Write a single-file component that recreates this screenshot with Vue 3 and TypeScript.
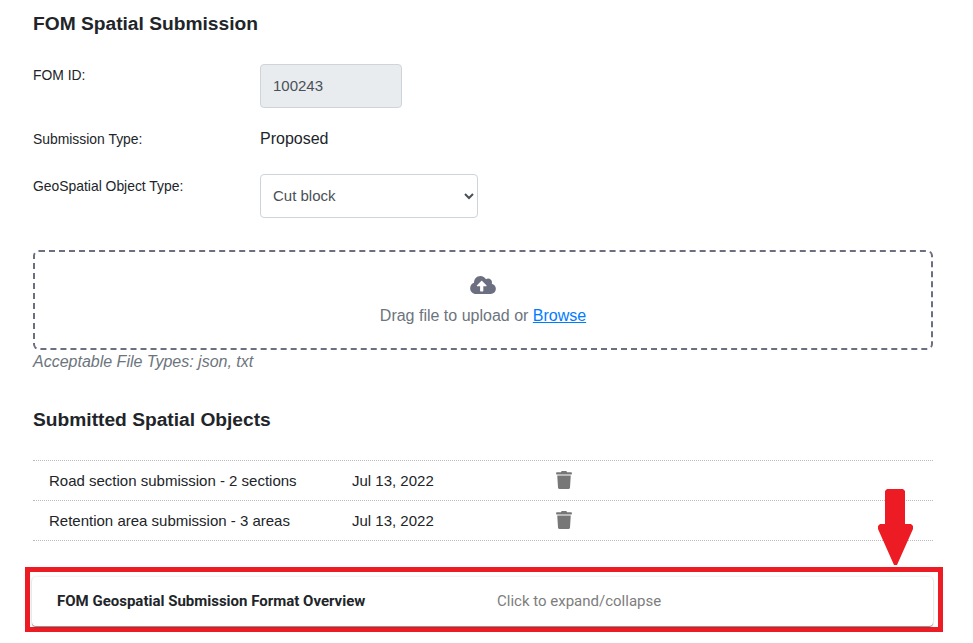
<script setup lang="ts">
interface SpatialObject {
  name: string;
  date: string;
}

const objects: SpatialObject[] = [
  { name: "Road section submission - 2 sections", date: "Jul 13, 2022" },
  { name: "Retention area submission - 3 areas", date: "Jul 13, 2022" },
];
</script>

<template>
  <div class="page">
    <h1 class="title">FOM Spatial Submission</h1>

    <div class="field field-id">
      <label class="label">FOM ID:</label>
      <input class="control id-input" value="100243" readonly />
    </div>
    <div class="field field-type">
      <label class="label">Submission Type:</label>
      <span class="type-value">Proposed</span>
    </div>
    <div class="field field-object">
      <label class="label">GeoSpatial Object Type:</label>
      <select class="control object-select">
        <option>Cut block</option>
        <option>Road section</option>
        <option>Retention area</option>
      </select>
    </div>

    <div class="dropzone">
      <svg class="cloud" viewBox="0 32 640 448" width="26" height="18">
        <path
          fill="#6c6f80"
          d="M537.6 226.6c4.1-10.7 6.4-22.4 6.4-34.6 0-53-43-96-96-96-19.7 0-38.1 6-53.3 16.2C367 64.2 315.3 32 256 32c-88.4 0-160 71.6-160 160 0 2.7.1 5.4.2 8.1C40.2 219.8 0 273.2 0 336c0 79.5 64.5 144 144 144h368c70.7 0 128-57.3 128-128 0-61.9-44-113.6-102.4-125.4zM393.4 288H328v112c0 8.8-7.2 16-16 16h-48c-8.8 0-16-7.2-16-16V288h-65.4c-14.3 0-21.4-17.2-11.3-27.3l105.4-105.4c6.2-6.2 16.4-6.2 22.6 0l105.4 105.4c10.1 10.1 2.9 27.3-11.3 27.3z"
        />
      </svg>
      <div class="drop-text">Drag file to upload or <a class="browse" href="#">Browse</a></div>
    </div>
    <div class="file-types">Acceptable File Types: json, txt</div>

    <h2 class="subtitle">Submitted Spatial Objects</h2>

    <div class="object-list">
      <div v-for="(item, index) in objects" :key="index" class="object-row">
        <span class="object-name">{{ item.name }}</span>
        <span class="object-date">{{ item.date }}</span>
        <svg class="trash" viewBox="0 0 448 512" width="16" height="18">
          <path
            fill="#777777"
            d="M432 32H312l-9.400-18.700A24 24 0 0 0 281.100 0H166.800a23.700 23.700 0 0 0-21.400 13.300L136 32H16A16 16 0 0 0 0 48v32a16 16 0 0 0 16 16h416a16 16 0 0 0 16-16V48a16 16 0 0 0-16-16zM53.200 467a48 48 0 0 0 47.900 45h245.800a48 48 0 0 0 47.900-45L416 128H32z"
          />
        </svg>
      </div>
    </div>

    <div class="highlight">
      <div class="accordion">
        <span class="accordion-title">FOM Geospatial Submission Format Overview</span>
        <span class="accordion-hint">Click to expand/collapse</span>
      </div>
    </div>

    <!-- annotation arrow over the page -->
    <svg class="arrow" viewBox="0 0 36 78" width="36" height="78">
      <path
        fill="#ed1c24"
        d="M9 0H25L27 2V35H33L35 37V40L19 76H16L0 40V37L2 35H7V2Z"
      />
    </svg>
  </div>
</template>

<style scoped>
.page {
  position: relative;
  box-sizing: border-box;
  width: 973px;
  height: 643px;
  padding: 12px 40px 0 33px;
  overflow: hidden;
  background: #fff;
  color: #212529;
  font-family: "Liberation Sans", Arial, sans-serif;
  font-size: 16px;
}
.title {
  margin: 0;
  font-size: 19.2px;
  line-height: 24px;
  font-weight: 700;
}
.field {
  display: flex;
  align-items: flex-start;
}
.label {
  width: 227px;
  flex-shrink: 0;
  font-size: 13.9px;
  line-height: 21px;
}
.field-id {
  margin-top: 28px;
}
.field-id .label {
  margin-top: 1px;
}
.field-type {
  margin-top: 19px;
  height: 24px;
}
.field-type .label {
  margin-top: 2px;
}
.type-value {
  line-height: 24px;
}
.field-object {
  margin-top: 23px;
}
.field-object .label {
  margin-top: 2px;
}
.control {
  box-sizing: border-box;
  height: 44px;
  border: 1px solid #ced4da;
  border-radius: 4px;
  color: #495057;
  font-family: "Liberation Sans", Arial, sans-serif;
  font-size: 15px;
  outline: none;
}
.id-input {
  width: 142px;
  padding: 0 12px 2px;
  background: #e9ecef;
}
.object-select {
  width: 218px;
  padding: 0 8px 2px;
  background: #fff;
}
.dropzone {
  box-sizing: border-box;
  height: 100px;
  margin-top: 32px;
  padding-top: 24px;
  border: 2px dashed #6c6f80;
  border-radius: 6px;
  display: flex;
  flex-direction: column;
  align-items: center;
  color: #6c757d;
}
.cloud {
  display: block;
}
.drop-text {
  margin-top: 10px;
  line-height: 24px;
}
.browse {
  color: #007bff;
  text-decoration: underline;
}
.file-types {
  margin-top: 1px;
  font-style: italic;
  line-height: 21px;
  color: #6c757d;
}
.subtitle {
  margin: 36px 0 0;
  font-size: 19.2px;
  line-height: 24px;
  font-weight: 700;
}
.object-list {
  margin-top: 28px;
  border-top: 1px dotted #bbb;
  font-size: 15px;
}
.object-row {
  box-sizing: border-box;
  display: flex;
  align-items: center;
  height: 40px;
  padding-left: 16px;
  padding-bottom: 1px;
  border-bottom: 1px dotted #bbb;
}
.object-name {
  width: 303px;
}
.object-date {
  width: 204px;
}
.highlight {
  box-sizing: border-box;
  width: 918px;
  height: 65px;
  margin: 26px 0 0 -8px;
  padding: 5px 5px 0 2px;
  border: 5px solid #ed1c24;
}
.accordion {
  box-sizing: border-box;
  display: flex;
  align-items: center;
  height: 49px;
  padding-left: 25px;
  padding-bottom: 1px;
  border-radius: 4px;
  background: #fff;
  box-shadow: 0 1px 1px rgba(0, 0, 0, 0.45), 0 0 3px rgba(0, 0, 0, 0.12);
}
.accordion-title {
  width: 440px;
  font-family: Roboto, sans-serif;
  font-size: 15px;
  font-weight: 700;
}
.accordion-hint {
  font-family: Roboto, sans-serif;
  font-size: 15px;
  color: #7d7d7d;
}
.arrow {
  position: absolute;
  left: 878px;
  top: 489px;
}
</style>
